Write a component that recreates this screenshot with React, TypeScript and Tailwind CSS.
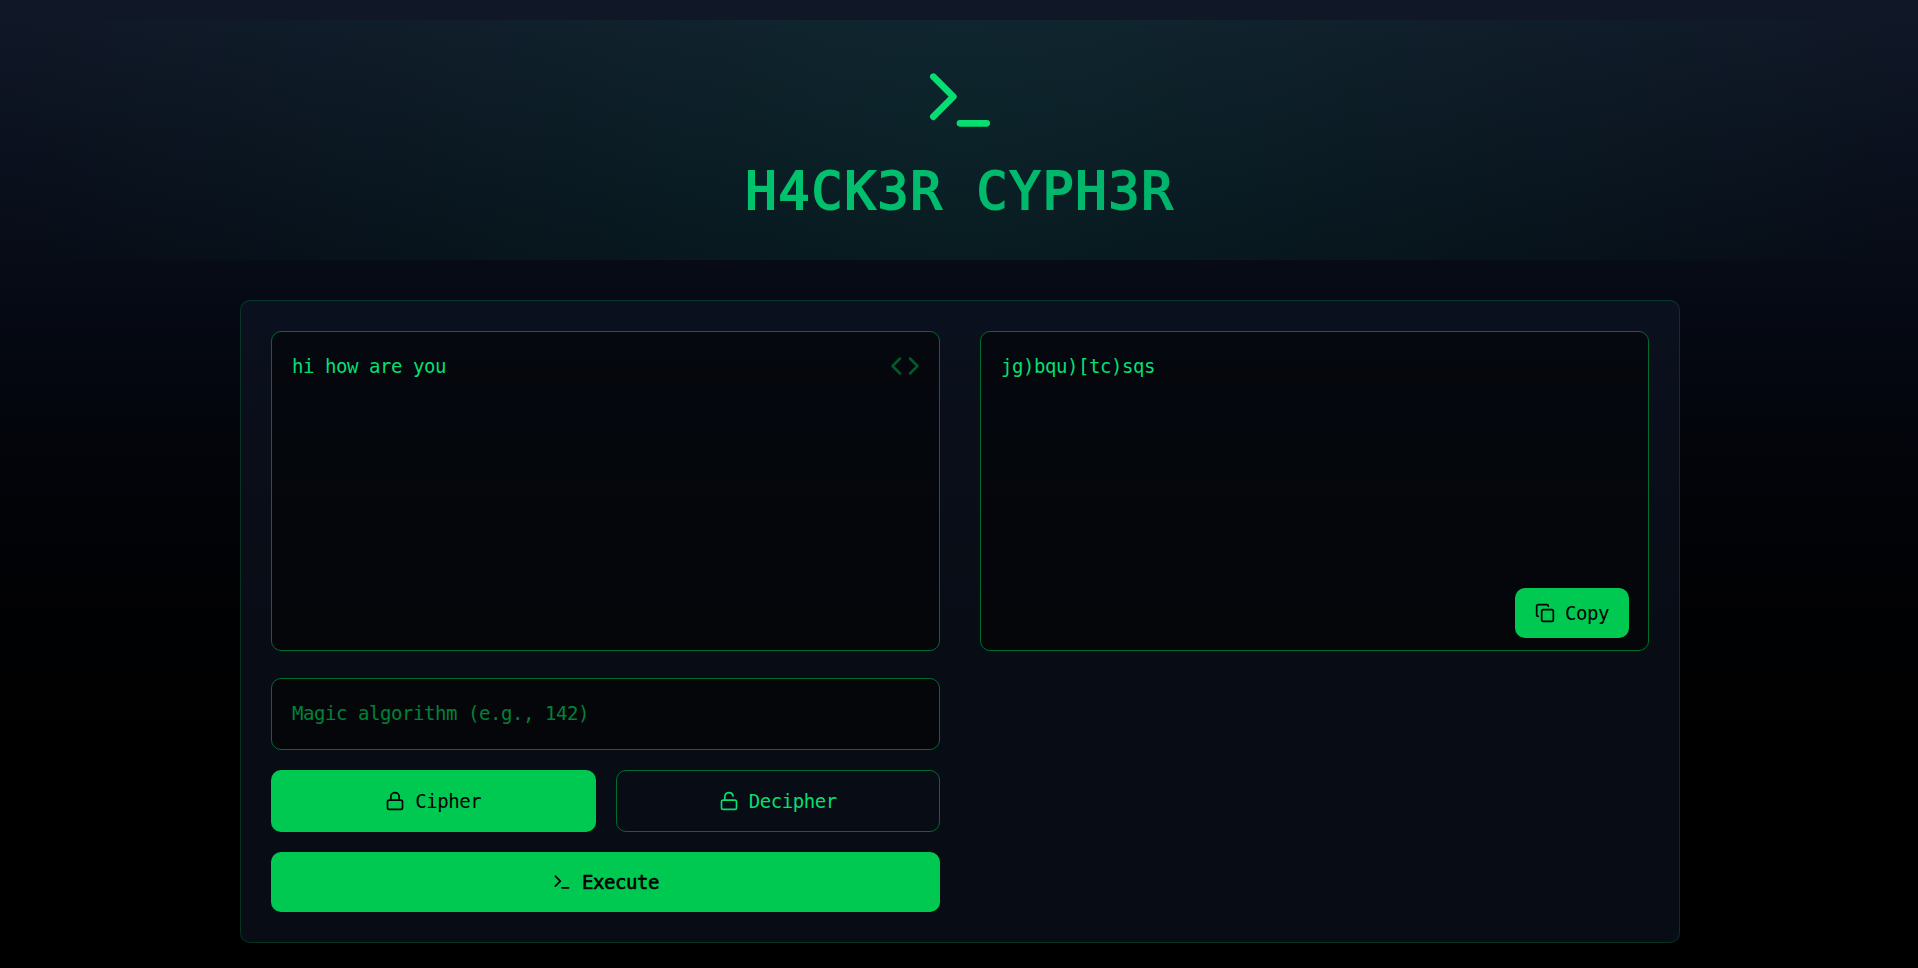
import { useState } from "react";
import { Code, Copy, Lock, LockOpen, Terminal } from "lucide-react";

export default function App() {
  const [message, setMessage] = useState("hi how are you");
  const [key, setKey] = useState("");

  return (
    <div className="h-[968px] w-full overflow-hidden">
      <div className="h-[968px] w-[1920px] bg-gradient-to-b from-gray-900 to-black pt-5 font-['DejaVu_Sans_Mono',monospace] text-[19px] leading-[30px] tracking-[-0.438px] text-green-400">
        <header className="flex h-[240px] flex-col items-center bg-[radial-gradient(circle_at_center,rgba(16,185,129,0.1),transparent)] pt-10">
          <Terminal className="size-20 shrink-0 text-green-400" strokeWidth={2} />
          <h1 className="mt-5 w-full bg-gradient-to-r from-green-400 to-emerald-600 bg-clip-text text-center text-[51.5px] leading-[63px] tracking-[2px] text-transparent [-webkit-text-stroke:2px_transparent]">
            H4CK3R CYPH3R
          </h1>
        </header>

        <main className="mx-auto mt-10 grid h-[643px] w-[1440px] grid-cols-2 gap-10 rounded-[10px] border border-green-500/20 bg-gray-900/50 p-[30px]">
          <section className="flex flex-col">
            <div className="relative h-[320px]">
              <textarea
                value={message}
                onChange={(e) => setMessage(e.target.value)}
                className="block h-[320px] w-full resize-none rounded-[10px] border border-[#016b30] bg-black/50 p-5 leading-[28px] tracking-[-0.438px] text-green-400 outline-none"
              />
              <Code className="absolute top-5 right-5 size-[30px] text-[#025a28]" />
            </div>
            <input
              value={key}
              onChange={(e) => setKey(e.target.value)}
              placeholder="Magic algorithm (e.g., 142)"
              className="mt-[27px] h-[72px] w-full rounded-[10px] border border-[#016b30] bg-black/50 px-5 pb-0.5 tracking-[-0.438px] outline-none placeholder:text-green-700"
            />
            <div className="mt-5 grid h-[62px] grid-cols-2 gap-5">
              <button className="flex items-center justify-center gap-2.5 rounded-[10px] bg-green-500 tracking-[-0.438px] text-black">
                <Lock className="size-5" />
                Cipher
              </button>
              <button className="flex items-center justify-center gap-2.5 rounded-[10px] border border-[#016b30] tracking-[-0.438px]">
                <LockOpen className="size-5" />
                Decipher
              </button>
            </div>
            <button className="mt-5 flex h-[60px] items-center justify-center gap-2.5 rounded-[10px] bg-green-500 tracking-[-0.438px] text-black">
              <Terminal className="size-5" />
              <span className="[-webkit-text-stroke:0.6px_black]">Execute</span>
            </button>
          </section>

          <section>
            <div className="relative h-[320px] rounded-[10px] border border-[#016b30] bg-black/50 p-5 leading-[28px]">
              jg)bqu)[tc)sqs
              <button className="absolute right-[19px] bottom-3 flex h-[50px] w-[114px] items-center justify-center gap-2.5 rounded-[10px] bg-green-500 tracking-[-0.438px] text-black">
                <Copy className="size-5" />
                Copy
              </button>
            </div>
          </section>
        </main>
      </div>
    </div>
  );
}
